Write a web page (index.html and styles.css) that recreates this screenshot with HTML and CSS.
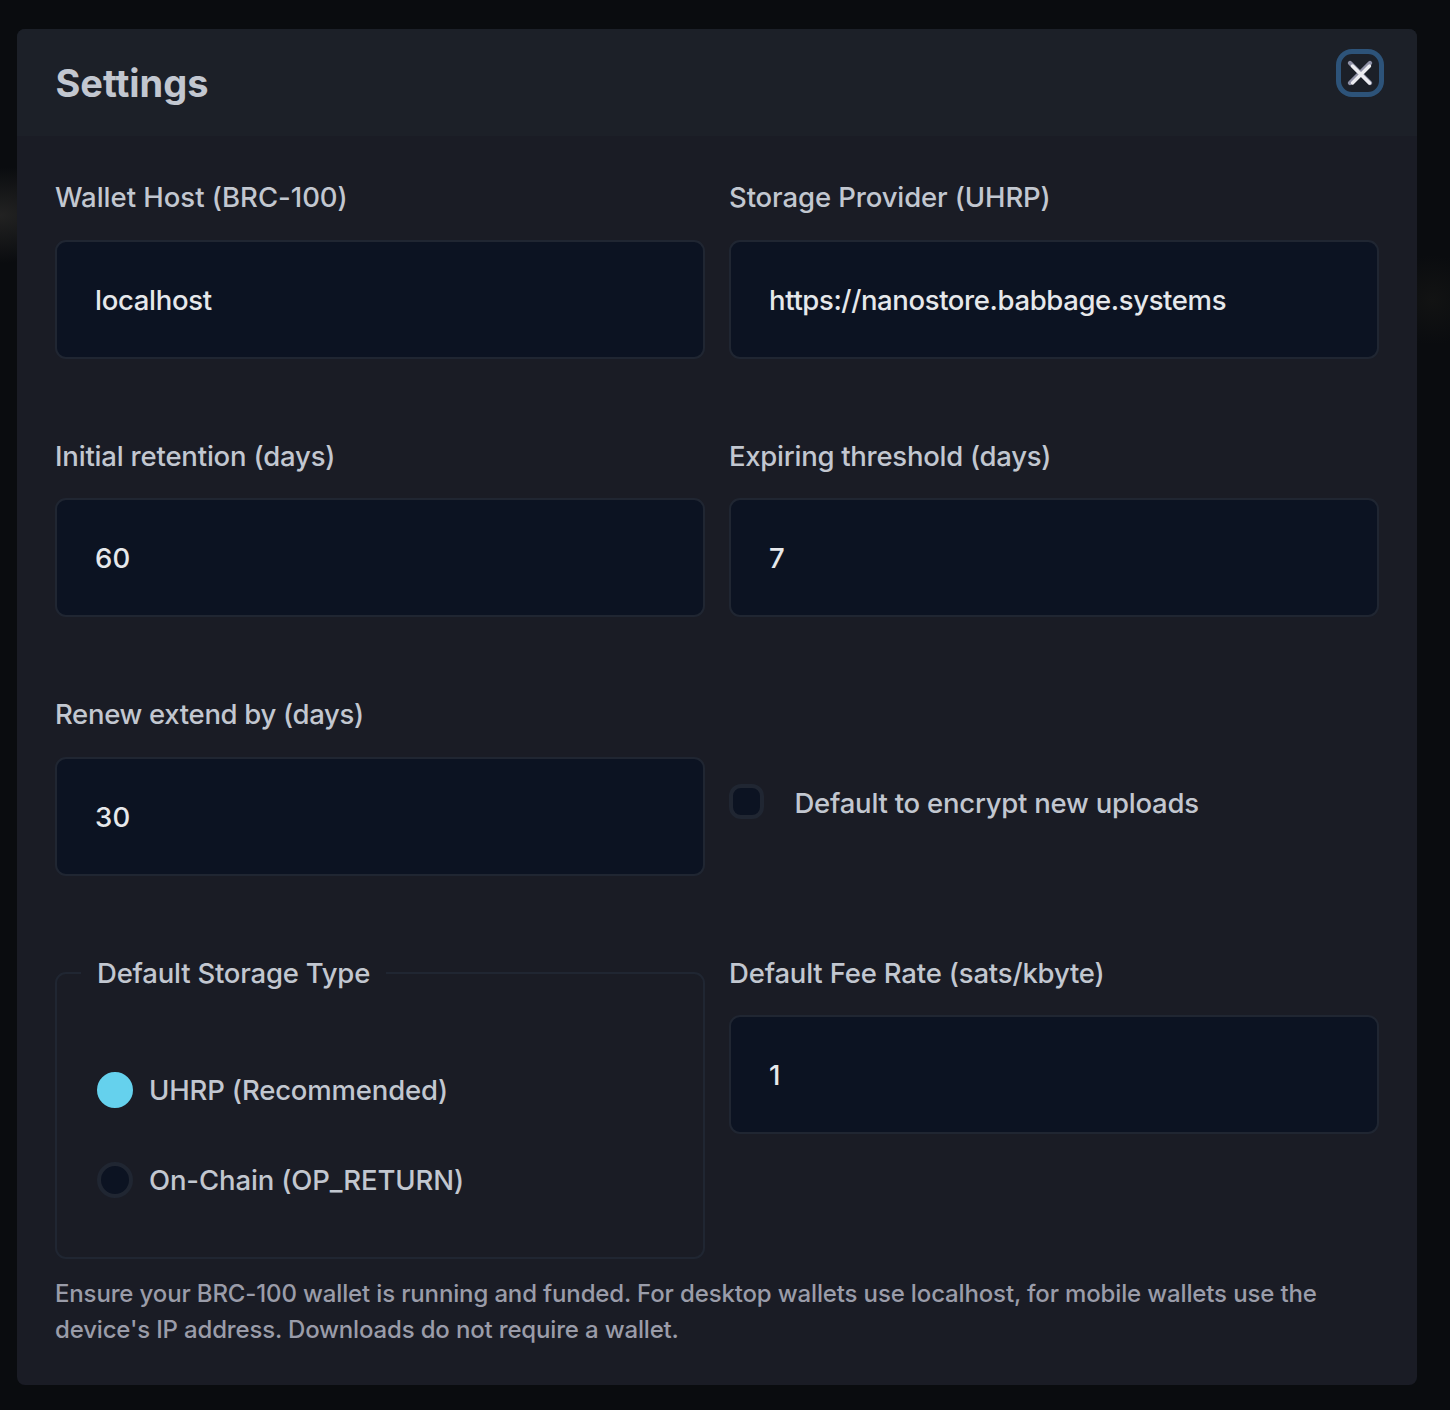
FILE: index.html
```
<!DOCTYPE html>
<html lang="en">
<head>
<meta charset="utf-8">
<title>Settings</title>
<link rel="stylesheet" href="styles.css">
</head>
<body>
<main class="dialog">
  <header class="dialog-header">
    <h1 class="title">Settings</h1>
    <button class="close" aria-label="Close">
      <svg width="48" height="48" viewBox="0 0 48 48" fill="none" stroke-linecap="round">
        <path d="M14 14 34 34M34 14 14 34" stroke="#8f91a6" stroke-width="4.4"/>
        <path d="M16.5 17 33.5 34M33.5 17 16.5 34" stroke="#ececf0" stroke-width="3.4"/>
      </svg>
    </button>
  </header>
  <form class="settings">
    <label class="field"><span class="label wallet">Wallet Host (BRC-100)</span><input class="input" type="text" value="localhost"></label>
    <label class="field"><span class="label provider">Storage Provider (UHRP)</span><input class="input url" type="text" value="https://nanostore.babbage.systems"></label>
    <label class="field"><span class="label retention">Initial retention (days)</span><input class="input number" type="text" value="60"></label>
    <label class="field"><span class="label threshold">Expiring threshold (days)</span><input class="input number" type="text" value="7"></label>
    <label class="field"><span class="label renew">Renew extend by (days)</span><input class="input number" type="text" value="30"></label>
    <label class="check"><input class="checkbox" type="checkbox"><span class="label encrypt">Default to encrypt new uploads</span></label>
    <fieldset class="storage">
      <legend class="legend"><span class="label type">Default Storage Type</span></legend>
      <label class="option"><input class="radio" type="radio" name="storage" checked><span class="label uhrp">UHRP (Recommended)</span></label>
      <label class="option"><input class="radio" type="radio" name="storage"><span class="label chain">On-Chain (OP_RETURN)</span></label>
    </fieldset>
    <label class="field"><span class="label fee">Default Fee Rate (sats/kbyte)</span><input class="input number" type="text" value="1"></label>
  </form>
  <p class="hint"><span class="line first">Ensure your BRC-100 wallet is running and funded. For desktop wallets use localhost, for mobile wallets use the</span> <span class="line second">device's IP address. Downloads do not require a wallet.</span></p>
</main>
</body>
</html>
```
FILE: styles.css
```
* { box-sizing: border-box; }

body {
  margin: 0;
  height: 1410px;
  padding: 29px 33px 0 17px;
  overflow: hidden;
  font-family: Inter, "Liberation Sans", sans-serif;
  color: #c2c7d0;
  background:
    radial-gradient(ellipse 90px 48px at 0 215px, #222222, transparent),
    radial-gradient(ellipse 50px 45px at 1432px 300px, #121313, transparent),
    #0a0c0f;
}

.dialog {
  width: 1400px;
  height: 1356px;
  border-radius: 8px;
  background: #1a1c25;
  overflow: hidden;
}

.dialog-header {
  display: flex;
  justify-content: space-between;
  align-items: flex-start;
  height: 107px;
  padding: 20px 33px 0 38.5px;
  background: #1c2028;
}

.title {
  margin: 9px 0 0;
  font-size: 38px;
  line-height: 50px;
  font-weight: 700;
  letter-spacing: -0.05px;
}

.close {
  width: 48px;
  height: 48px;
  padding: 0;
  border: 0;
  border-radius: 16px;
  background: none;
  box-shadow: inset 0 0 0 5px #2d5379;
}

.close svg { display: block; }

.settings {
  display: grid;
  grid-template-columns: 650px 650px;
  grid-template-rows: repeat(3, 258.5px) 307.5px;
  column-gap: 24px;
  padding: 40px 38px 0;
}

.field {
  display: flex;
  flex-direction: column;
  gap: 21.9px;
}

.label {
  align-self: flex-start;
  font-size: 27.5px;
  font-weight: 450;
  line-height: 42px;
  white-space: nowrap;
}

.wallet { letter-spacing: -0.02px; }
.provider { letter-spacing: -0.12px; }
.retention { letter-spacing: -0.19px; }
.threshold { letter-spacing: -0.27px; }
.renew { letter-spacing: -0.32px; }
.encrypt { letter-spacing: -0.24px; }
.type { letter-spacing: -0.22px; }
.uhrp { letter-spacing: -0.17px; }
.chain { letter-spacing: -0.13px; }
.fee { letter-spacing: -0.18px; }

.input {
  width: 100%;
  height: 119px;
  padding: 1px 38px 0;
  border: 2px solid #202632;
  border-radius: 11px;
  outline: 0;
  background: #0c1322;
  color: #e6e8eb;
  font: 450 27.5px Inter, "Liberation Sans", sans-serif;
  letter-spacing: -0.3px;
}

.url { letter-spacing: -0.38px; }
.number { letter-spacing: 0.3px; }

.check {
  display: flex;
  align-items: flex-start;
  gap: 30.5px;
  padding-top: 89px;
}

.checkbox, .radio {
  appearance: none;
  flex: none;
  margin: 0;
  border: 4px solid #202632;
  background: #0c1322;
}

.checkbox {
  width: 35px;
  height: 35px;
  margin-top: 2px;
  border-radius: 12px;
}

.radio {
  width: 36px;
  height: 36px;
  border-radius: 50%;
}

.radio:checked {
  border-color: #65d1ed;
  background: #65d1ed;
}

.storage {
  min-width: 0;
  margin: 0;
  padding: 75px 40px 0;
  border: 2px solid #202632;
  border-radius: 11px;
}

.legend {
  margin-left: -16px;
  padding: 0 16px;
  line-height: 42px;
}

.legend .label { display: block; }

.option {
  display: flex;
  align-items: center;
  gap: 16px;
  height: 42px;
  margin-bottom: 48px;
}

.option .label { align-self: center; }

.hint {
  margin: 17px 38px 0;
  color: #9a9ca9;
  font-size: 24px;
  font-weight: 450;
  line-height: 36px;
}

.line {
  display: table;
  white-space: nowrap;
}

.first { letter-spacing: -0.145px; }
.second { letter-spacing: -0.165px; }
```
